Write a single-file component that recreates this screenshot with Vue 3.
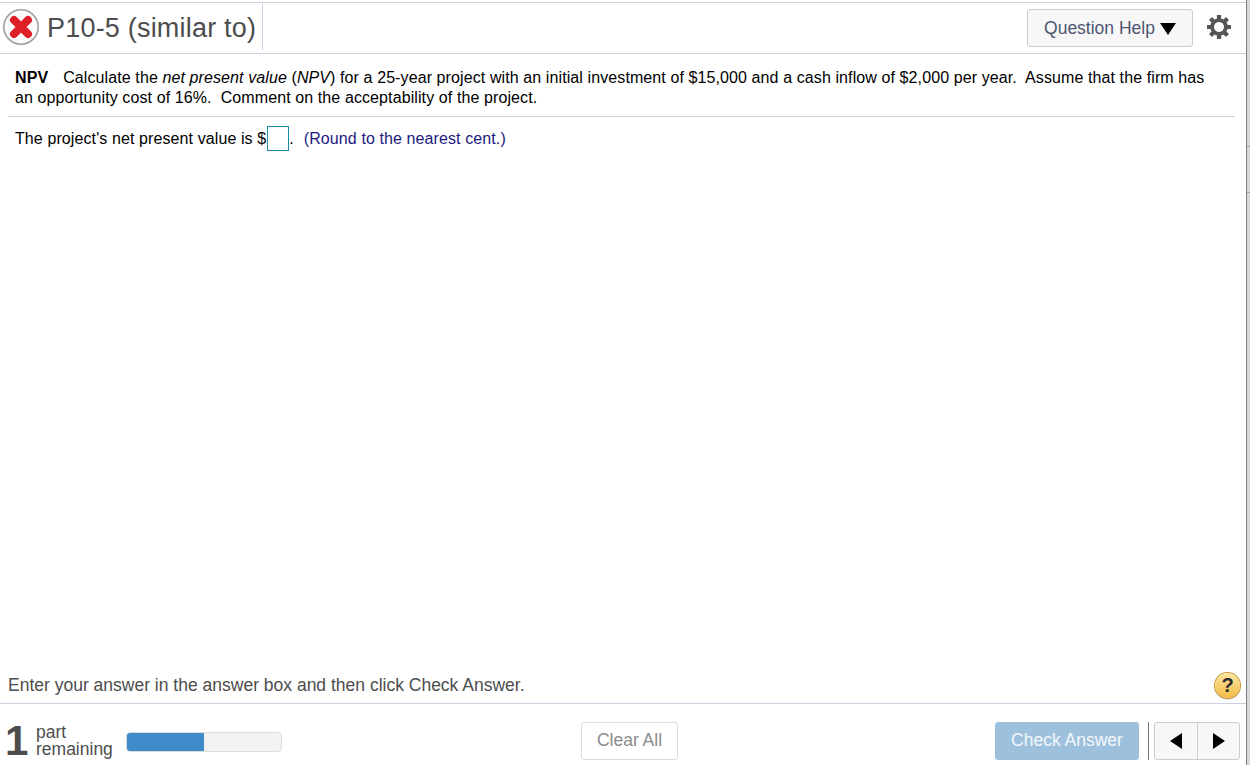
<script setup>
const parts = 1;
const progress = 50;
</script>

<template>
  <div class="page">
    <div class="main">
      <header class="top">
        <div class="title-wrap">
          <svg class="status" width="38" height="38" viewBox="0 0 38 38">
            <circle cx="19" cy="19" r="17.2" fill="#fbfbfb" stroke="#a0a0a0" stroke-width="1.6" />
            <path d="M12 12 L26 26 M26 12 L12 26" stroke="#df1f26" stroke-width="8" stroke-linecap="round" fill="none" />
          </svg>
          <h1 class="title">P10-5 (similar to)</h1>
        </div>
        <div class="top-right">
          <button class="help-btn">Question Help<span class="down"></span></button>
          <svg class="gear" width="24" height="24" viewBox="0 0 24 24">
            <circle cx="12" cy="12" r="6.8" fill="none" stroke="#555" stroke-width="4" />
            <path d="M12 0V6M12 18v6M0 12H6M18 12h6M3.500 3.500 7.500 7.500M16.500 16.500l4 4M20.500 3.500 16.500 7.500M7.500 16.500l-4 4" fill="none" stroke="#555" stroke-width="4.2" />
            <circle cx="12" cy="12" r="4.8" fill="#fff" />
          </svg>
        </div>
      </header>

      <section class="question">
        <p class="statement">
          <b>NPV</b><span class="gap"></span>Calculate the <i>net present value</i> (<i>NPV</i>) for a 25-year project with an initial investment of $15,000 and a cash inflow of $2,000 per year.&nbsp; Assume that the firm has an opportunity cost of 16%.&nbsp; Comment on the acceptability of the project.
        </p>
        <p class="answer">
          The project's net present value is $<input class="box" type="text" />.<span class="hint">(Round to the nearest cent.)</span>
        </p>
      </section>

      <div class="instruction">
        <span>Enter your answer in the answer box and then click Check Answer.</span>
        <span class="q-mark">?</span>
      </div>

      <footer class="bottom">
        <div class="remaining">
          <span class="count">{{ parts }}</span>
          <span class="count-label">part<br />remaining</span>
          <div class="bar"><div class="fill" :style="{ width: progress + '%' }"></div></div>
        </div>
        <button class="clear-btn">Clear All</button>
        <div class="actions">
          <button class="check-btn">Check Answer</button>
          <span class="divider"></span>
          <div class="nav">
            <button class="nav-btn"><span class="left"></span></button>
            <button class="nav-btn"><span class="right"></span></button>
          </div>
        </div>
      </footer>
    </div>
    <div class="edge">
      <div class="edge-seg one"></div>
      <div class="edge-seg two"></div>
      <div class="edge-seg three"></div>
    </div>
  </div>
</template>

<style>
html,
body {
  margin: 0;
  background: #fff;
  overflow: hidden;
}
</style>

<style scoped>
.page {
  display: flex;
  width: 1250px;
  height: 765px;
  font-family: "Liberation Sans", Arial, sans-serif;
  color: #000;
}
.main {
  flex: 1;
  display: flex;
  flex-direction: column;
  min-width: 0;
}
.edge {
  width: 4px;
  display: flex;
  flex-direction: column;
  border-left: 1px solid #7d7d7d;
  box-sizing: border-box;
}
.edge-seg {
  background: #d8d8d8;
}
.edge-seg.one {
  height: 146px;
  border-bottom: 1px solid #a8a8a8;
}
.edge-seg.two {
  height: 45px;
  border-bottom: 1px solid #a8a8a8;
}
.edge-seg.three {
  flex: 1;
}
.top {
  margin-top: 2px;
  height: 50px;
  border-top: 1px solid #c9d0e0;
  border-bottom: 1px solid #c9d0e0;
  display: flex;
  justify-content: space-between;
  align-items: stretch;
}
.title-wrap {
  display: flex;
  align-items: center;
  width: 262px;
  height: 46px;
  margin-top: 1px;
  border-right: 1px solid #c9d0e0;
}
.status {
  margin-left: 2px;
  flex: none;
}
.title {
  margin: 2px 0 0 7px;
  font-size: 27px;
  font-weight: 400;
  color: #4d4d4d;
  white-space: nowrap;
  letter-spacing: 0.2px;
}
.top-right {
  display: flex;
  align-items: center;
  padding-right: 15px;
}
.help-btn {
  width: 166px;
  height: 38px;
  border: 1px solid #ccc;
  border-radius: 3px;
  background: #f7f7f7;
  font: 17.5px "Liberation Sans", Arial, sans-serif;
  color: #4d5670;
  padding: 0;
}
.down {
  display: inline-block;
  width: 0;
  height: 0;
  margin-left: 5px;
  border-left: 8.5px solid transparent;
  border-right: 8.5px solid transparent;
  border-top: 12px solid #000;
  vertical-align: -1px;
}
.gear {
  margin-left: 14px;
  margin-top: -3px;
}
.question {
  flex: 1;
  padding: 14px 11px 0 15px;
  font-size: 16px;
  line-height: 20px;
  letter-spacing: 0.1px;
}
.statement {
  margin: 0 0 0 -7px;
  padding: 0 20px 8px 7px;
  border-bottom: 1px solid #ccd0e0;
}
.gap {
  display: inline-block;
  width: 15px;
}
.answer {
  margin: 9px 0 0;
  display: flex;
  align-items: center;
  height: 25px;
}
.box {
  width: 22px;
  height: 25px;
  box-sizing: border-box;
  border: 1px solid #1a8aa8;
  padding: 0;
  margin: 0 0 0 1px;
  background: #fff;
  outline: none;
}
.hint {
  color: #1c1a80;
  margin-left: 10px;
}
.instruction {
  height: 38px;
  border-bottom: 1px solid #c9d0e0;
  padding: 0 6px 0 8px;
  display: flex;
  justify-content: space-between;
  align-items: center;
  font-size: 17.5px;
  color: #4d4d4d;
}
.instruction > span:first-child {
  margin-top: 2px;
}
.q-mark {
  width: 25px;
  height: 25px;
  margin-top: 3px;
  border-radius: 50%;
  background: linear-gradient(#fce6a0, #f2ba45);
  box-shadow: 0 0 0 1px #c8962f, 0 1px 2px rgba(0, 0, 0, 0.35);
  color: #2b2b2b;
  font-weight: 700;
  font-size: 20px;
  text-align: center;
  line-height: 25px;
}
.bottom {
  height: 61px;
  display: flex;
  align-items: center;
  padding: 13px 6px 0 0;
  box-sizing: border-box;
}
.remaining {
  display: flex;
  align-items: center;
  width: 581px;
  padding-left: 5px;
  box-sizing: border-box;
}
.count {
  font-size: 42px;
  font-weight: 700;
  color: #4d4d4d;
  width: 31px;
  line-height: 42px;
}
.count-label {
  font-size: 17.5px;
  line-height: 17px;
  color: #4d4d4d;
  width: 90px;
  margin-top: 0;
}
.bar {
  width: 156px;
  height: 20px;
  margin-top: 2px;
  border-radius: 4px;
  background: #f2f2f2;
  border: 1px solid #ddd;
  box-sizing: border-box;
  overflow: hidden;
}
.fill {
  height: 100%;
  background: #3f8ac9;
}
.clear-btn {
  width: 97px;
  height: 38px;
  border: 1px solid #ddd;
  border-radius: 3px;
  background: #fff;
  color: #8c8c8c;
  font: 17.5px "Liberation Sans", Arial, sans-serif;
  padding: 0 0 2px;
}
.actions {
  margin-left: auto;
  display: flex;
  align-items: center;
}
.check-btn {
  width: 144px;
  height: 38px;
  border: none;
  border-radius: 3px;
  background: #9dc1dd;
  color: #f4f7fa;
  font: 17.5px "Liberation Sans", Arial, sans-serif;
  padding: 0 0 2px;
}
.divider {
  width: 1px;
  height: 38px;
  background: #777;
  margin: 0 5px 0 9px;
}
.nav {
  display: flex;
  border: 1px solid #ccc;
  border-radius: 3px;
  background: #f7f7f7;
  height: 38px;
  box-sizing: border-box;
}
.nav-btn {
  width: 42px;
  border: none;
  background: transparent;
  padding: 0;
  display: flex;
  align-items: center;
  justify-content: center;
}
.nav-btn + .nav-btn {
  border-left: 1px solid #ccc;
}
.left,
.right {
  width: 0;
  height: 0;
  border-top: 8px solid transparent;
  border-bottom: 8px solid transparent;
}
.left {
  border-right: 12px solid #000;
}
.right {
  border-left: 12px solid #000;
}
</style>
